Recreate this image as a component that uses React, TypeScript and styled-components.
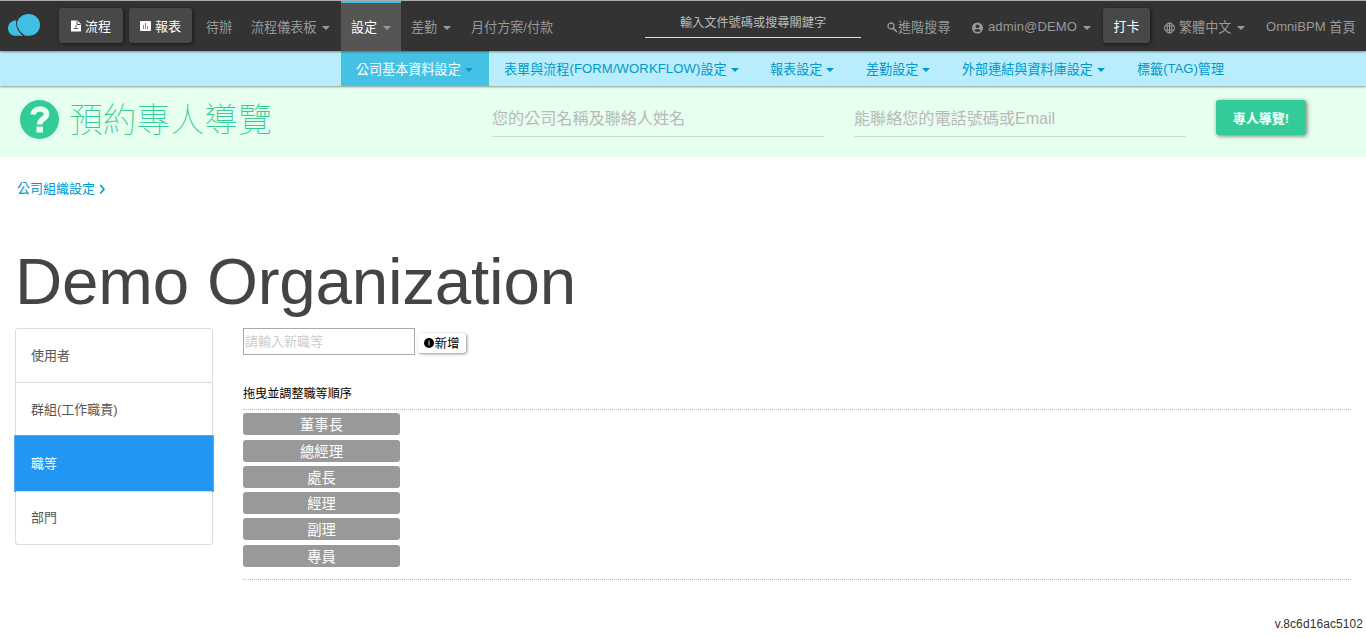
import React from "react";
import styled, { createGlobalStyle, css } from "styled-components";

const GlobalStyle = createGlobalStyle`
  * { box-sizing: border-box; }
  html, body { margin: 0; padding: 0; }
  body {
    background: #fff;
    color: #444;
    font: 13px/18px "Liberation Sans", "Noto Sans CJK TC", sans-serif;
    overflow: hidden;
  }
  input, button { font-family: inherit; }
`;

const Page = styled.div`
  height: 637px;
  display: flex;
  flex-direction: column;
`;

const Navbar = styled.nav`
  height: 51px;
  flex: none;
  display: flex;
  align-items: stretch;
  background: #333;
  border-top: 1px solid #aaa;
  box-shadow: 0 1px 2px rgba(0, 0, 0, 0.4);
  z-index: 2;
`;

const Brand = styled.a`
  width: 59px;
  padding: 13px 0 0 8px;
`;

const RaisedButton = styled.button<{ $w: number; $mr: number }>`
  width: ${(p) => p.$w}px;
  height: 35px;
  margin: 7px ${(p) => p.$mr}px 0 0;
  padding: 0;
  display: flex;
  align-items: center;
  justify-content: center;
  gap: 4px;
  border: 0;
  border-radius: 3px;
  background: #484848;
  color: #fff;
  font-size: 13px;
  box-shadow: 1px 1px 4px rgba(0, 0, 0, 0.6);
`;

const Latin = styled.span<{ $spacing?: number }>`
  position: relative;
  top: -1px;
  letter-spacing: ${(p) => p.$spacing ?? 0}px;
`;

const Caret = styled.i`
  width: 0;
  height: 0;
  margin: 1px 0 0 6px;
  border: 4px solid transparent;
  border-top-color: currentColor;
  border-bottom: 0;
`;

const NavItem = styled.a<{ $w: number; $active?: boolean }>`
  width: ${(p) => p.$w}px;
  padding: 3px 0 0 10px;
  display: flex;
  align-items: center;
  white-space: pre;
  font-size: 13.1px;
  color: #999;
  ${(p) =>
    p.$active &&
    css`
      padding-top: 1px;
      background: #555;
      color: #fff;
      border-top: 2px solid #40bfe5;
      ${Caret} { color: #999; }
    `}
`;

const SearchInput = styled.input`
  width: 216px;
  height: 29px;
  margin: 8px 16px 0 82px;
  padding: 0 0 1px;
  border: 0;
  border-bottom: 1px solid #ddd;
  background: transparent;
  text-align: center;
  font-size: 12.2px;
  outline: 0;
  &::placeholder { color: #bbb; opacity: 1; }
`;

const SubNav = styled.nav`
  height: 35px;
  flex: none;
  display: flex;
  padding-left: 341px;
  background: #b9edfb;
  box-shadow: 0 1px 2px rgba(0, 0, 0, 0.4);
  z-index: 1;
`;

const SubItem = styled.a<{ $w: number; $active?: boolean }>`
  width: ${(p) => p.$w}px;
  padding: 2px 0 0 15px;
  display: flex;
  align-items: center;
  white-space: nowrap;
  font-size: 13.1px;
  color: ${(p) => (p.$active ? "#fff" : "#09c")};
  background: ${(p) => (p.$active ? "#45c1e6" : "transparent")};
  ${Caret} { color: #09c; margin-left: 4px; }
`;

const TourBanner = styled.section`
  height: 71px;
  flex: none;
  display: flex;
  align-items: flex-start;
  padding: 0 60px 0 20px;
  background: #e6ffee;
`;

const TourTitle = styled.h2`
  width: 472px;
  height: 67px;
  margin: 0;
  display: flex;
  align-items: center;
  gap: 10px;
  font-size: 33.8px;
  font-weight: 100;
  line-height: 40px;
  color: #3c9;
`;

const TourInput = styled.input`
  width: 332px;
  height: 37px;
  margin: 14px 30px 0 0;
  padding: 0;
  border: 0;
  border-bottom: 1px solid #d5d9d6;
  background: transparent;
  font-size: 16.1px;
  outline: 0;
  &::placeholder { color: #b8b8b8; opacity: 1; }
`;

const TourButton = styled.button`
  width: 90px;
  height: 35px;
  margin-top: 14px;
  padding: 0;
  border: 0;
  border-radius: 3px;
  background: #3c9;
  color: #fff;
  font-size: 13px;
  font-weight: 700;
  box-shadow: 1px 1px 4px rgba(0, 0, 0, 0.5);
`;

const Breadcrumb = styled.div`
  display: flex;
  align-items: center;
  gap: 4px;
  height: 18px;
  margin: 23px 0 0 17px;
  color: #09c;
`;

const OrgTitle = styled.h1`
  margin: 44px 0 0 15px;
  height: 86px;
  font-size: 65.5px;
  letter-spacing: -0.2px;
  line-height: 80px;
  font-weight: 400;
  color: #444;
`;

const Columns = styled.main`
  display: flex;
  align-items: flex-start;
  gap: 30px;
  padding: 0 15px;
`;

const SideMenu = styled.ul`
  width: 198px;
  height: 217px;
  flex: none;
  margin: 0;
  padding: 0;
  list-style: none;
  border: 1px solid #ddd;
  border-radius: 3px;
`;

const SideItem = styled.li<{ $active?: boolean }>`
  height: 54px;
  padding: 0 15px;
  display: flex;
  align-items: center;
  color: #555;
  &:first-child { height: 53px; padding-top: 1px; }
  &:last-child { padding-bottom: 2px; }
  & + & { border-top: 1px solid #ddd; }
  ${(p) =>
    p.$active &&
    css`
      &&& {
        height: 57px;
        margin: -1px -2px;
        padding: 0 16px;
        border: 1px solid #5aa5fa;
        background: #2196f3;
        color: #fff;
      }
    `}
`;

const Content = styled.section`
  flex: 1;
`;

const AddForm = styled.form`
  display: flex;
  gap: 3px;
  height: 27px;
`;

const RankInput = styled.input`
  width: 172px;
  height: 27px;
  padding: 1px;
  border: 1px solid #aaa;
  font-size: 13px;
  outline: 0;
  &::placeholder { color: #ccc; opacity: 1; }
`;

const AddButton = styled.button`
  width: 48px;
  height: 20px;
  margin-top: 5px;
  padding: 0 0 1px;
  display: flex;
  align-items: center;
  justify-content: center;
  border: 0;
  border-radius: 3px;
  background: #fff;
  color: #000;
  font-size: 12.5px;
  box-shadow: 1px 1px 3px rgba(0, 0, 0, 0.45);
`;

const Hint = styled.p`
  margin: 31px 0 0;
  height: 23px;
  font-size: 12.1px;
  line-height: 17px;
  color: #000;
`;

const RankList = styled.ol`
  height: 171px;
  margin: 0;
  padding: 3.4px 0 0;
  list-style: none;
  display: flex;
  flex-direction: column;
  gap: 4.25px;
  border: 1px dotted #bbb;
  border-width: 1px 0;
`;

const RankItem = styled.li`
  width: 157px;
  height: 22px;
  flex: none;
  border-radius: 3px;
  background: #999;
  color: #fff;
  font-size: 14.3px;
  line-height: 24px;
  text-align: center;
`;

const Version = styled.footer`
  margin: auto 3px 4px auto;
  font-size: 12px;
  letter-spacing: 0.08px;
  color: #333;
`;

const CloudLogo = () => (
  <svg width="33" height="23" viewBox="0 0 33 23">
    <path
      d="M8.300 6.200C3.500 6.400 0 9.800 0 14.200C0 18.700 3.500 21.800 7.800 21.800H15.200C10 18.300 7.200 12.500 8.300 6.200Z"
      fill="#40bfe5"
    />
    <path
      d="M20.700 0C26.800 0 32 4.700 32 11C32 17.300 27 21.800 21 21.800H17.500C12 18.500 9 14 9 9.500C9.500 4 14.600 0 20.700 0Z"
      fill="#40bfe5"
    />
  </svg>
);

const FileIcon = () => (
  <svg width="10" height="12" viewBox="0 0 10 12">
    <path d="M0 .5h6.500l3.500 3.500v7.500H0z" fill="#fff" />
    <path d="M6 1v3.500h3.500" fill="none" stroke="#484848" />
    <path d="M5 5v3M2.500 8.500h5" fill="none" stroke="#666" />
  </svg>
);

const ChartIcon = () => (
  <svg width="11" height="10" viewBox="0 0 11 10">
    <rect width="11" height="10" rx="1" fill="#fff" />
    <path d="M3.500 4v4M5.500 2v6M7.500 5v3" stroke="#888" />
  </svg>
);

const SearchIcon = () => (
  <svg width="11" height="11" viewBox="0 0 11 11">
    <circle cx="4" cy="4" r="3" fill="none" stroke="currentColor" strokeWidth="1.300" />
    <path d="M6.300 6.300l3.700 3.700" stroke="currentColor" strokeWidth="1.700" />
  </svg>
);

const UserIcon = () => (
  <svg width="17" height="12" viewBox="0 0 17 12">
    <circle cx="6.500" cy="6" r="5.500" fill="currentColor" />
    <circle cx="6.500" cy="4.300" r="1.900" fill="#333" />
    <path d="M3.200 8.500c.6-1.700 6-1.700 6.600 0-1.300 1.900-5.300 1.900-6.600 0z" fill="#333" />
  </svg>
);

const GlobeIcon = () => (
  <svg width="16" height="12" viewBox="0 0 16 12" fill="none" stroke="currentColor">
    <circle cx="6.500" cy="6" r="5" />
    <ellipse cx="6.500" cy="6" rx="2.300" ry="5" />
    <path d="M6.500 1v10M2 4h9M2 8h9" />
  </svg>
);

const HelpIcon = () => (
  <svg width="39" height="39" viewBox="0 0 39 39">
    <circle cx="19.500" cy="19.500" r="19.500" fill="#3c9" />
    <path
      d="M13 14.500C14 7 27 7.500 26.500 14.500C26.200 19 19.600 18.500 19.600 24.500"
      fill="none"
      stroke="#e6ffee"
      strokeWidth="5.500"
    />
    <rect x="16.500" y="26.500" width="6.500" height="6" fill="#e6ffee" />
  </svg>
);

const ChevronIcon = () => (
  <svg width="7" height="11" viewBox="0 0 7 11">
    <path d="M1.300 1l3.700 4.300L1.300 9.600" fill="none" stroke="currentColor" strokeWidth="1.600" />
  </svg>
);

const AddIcon = () => (
  <svg width="10" height="10" viewBox="0 0 10 10">
    <circle cx="5" cy="5" r="5" fill="#000" />
    <path d="M5 2.500v5" stroke="#ddd" />
  </svg>
);

const sideItems = ["使用者", "群組(工作職責)", "職等", "部門"];
const ranks = ["董事長", "總經理", "處長", "經理", "副理", "專員"];

export default function App() {
  return (
    <Page>
      <GlobalStyle />
      <Navbar>
        <Brand><CloudLogo /></Brand>
        <RaisedButton $w={64} $mr={6}><FileIcon />流程</RaisedButton>
        <RaisedButton $w={63} $mr={4}><ChartIcon />報表</RaisedButton>
        <NavItem $w={45}>待辦</NavItem>
        <NavItem $w={100}>流程儀表板<Caret /></NavItem>
        <NavItem $w={60} $active>設定<Caret /></NavItem>
        <NavItem $w={60}>差勤<Caret /></NavItem>
        <NavItem $w={102}>月付方案/付款</NavItem>
        <SearchInput placeholder="輸入文件號碼或搜尋關鍵字" />
        <NavItem $w={84}><SearchIcon />進階搜尋</NavItem>
        <NavItem $w={142}><UserIcon /><Latin $spacing={0.08}>admin@DEMO</Latin><Caret /></NavItem>
        <RaisedButton $w={47} $mr={3}>打卡</RaisedButton>
        <NavItem $w={103}><GlobeIcon />繁體中文<Caret /></NavItem>
        <NavItem $w={110}><Latin>OmniBPM </Latin>首頁</NavItem>
      </Navbar>
      <SubNav>
        <SubItem $w={148} $active>公司基本資料設定<Caret /></SubItem>
        <SubItem $w={266}>表單與流程<Latin $spacing={0.1}>(FORM/WORKFLOW)</Latin>設定<Caret /></SubItem>
        <SubItem $w={96}>報表設定<Caret /></SubItem>
        <SubItem $w={96}>差勤設定<Caret /></SubItem>
        <SubItem $w={175}>外部連結與資料庫設定<Caret /></SubItem>
        <SubItem $w={118}>標籤<Latin>(TAG)</Latin>管理</SubItem>
      </SubNav>
      <TourBanner>
        <TourTitle><HelpIcon />預約專人導覽</TourTitle>
        <TourInput placeholder="您的公司名稱及聯絡人姓名" />
        <TourInput placeholder="能聯絡您的電話號碼或Email" />
        <TourButton>專人導覽!</TourButton>
      </TourBanner>
      <Breadcrumb>公司組織設定<ChevronIcon /></Breadcrumb>
      <OrgTitle>Demo Organization</OrgTitle>
      <Columns>
        <SideMenu>
          {sideItems.map((label, i) => (
            <SideItem key={label} $active={i === 2}>{label}</SideItem>
          ))}
        </SideMenu>
        <Content>
          <AddForm>
            <RankInput placeholder="請輸入新職等" />
            <AddButton type="button"><AddIcon />新增</AddButton>
          </AddForm>
          <Hint>拖曳並調整職等順序</Hint>
          <RankList>
            {ranks.map((r) => <RankItem key={r}>{r}</RankItem>)}
          </RankList>
        </Content>
      </Columns>
      <Version>v.8c6d16ac5102</Version>
    </Page>
  );
}
